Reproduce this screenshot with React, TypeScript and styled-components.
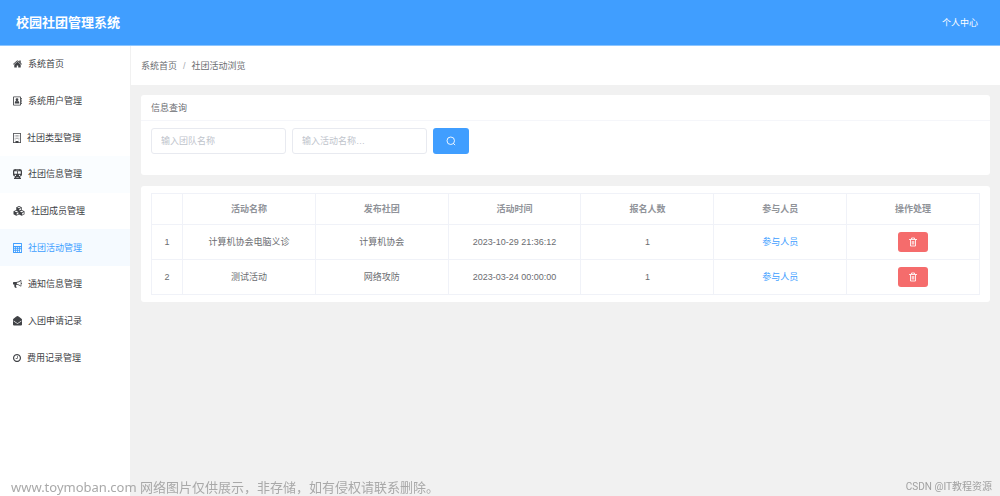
import React from 'react';
import styled, { createGlobalStyle } from 'styled-components';

const GlobalStyle = createGlobalStyle`
  * { box-sizing: border-box; }
  body {
    margin: 0;
    background: #f1f1f1;
    color: #6b6d71;
    font: 9px/14px "Liberation Sans", "Noto Sans CJK SC", sans-serif;
  }
  button, input { font: inherit; }
  a { color: inherit; text-decoration: none; }
`;

const Page = styled.div`
  display: flex;
  flex-direction: column;
  min-height: 100vh;
`;

const Header = styled.header`
  display: flex;
  align-items: center;
  justify-content: space-between;
  height: 46px;
  padding: 0 22px 0 16px;
  background: #409eff;
  border-bottom: 1px solid #8cc5ff;
  color: #fff;
`;

const Title = styled.h1`
  margin: 0;
  font-size: 13px;
  line-height: 20px;
  font-weight: 700;
`;

const Body = styled.div`
  display: flex;
  flex: 1;
`;

const Sidebar = styled.nav`
  flex: none;
  width: 130px;
  background: #fff;
`;

const Menu = styled.ul`
  display: grid;
  grid-auto-rows: 1fr;
  height: 330px;
  margin: 0;
  padding: 0;
  list-style: none;
`;

const MenuLink = styled.a<{ $state?: 'active' | 'hover' }>`
  display: flex;
  align-items: center;
  gap: 6px;
  height: 100%;
  padding-left: 13px;
  color: ${(p) => (p.$state === 'active' ? '#409eff' : '#404246')};
  background: ${(p) => (p.$state === 'active' ? '#f5faff' : p.$state === 'hover' ? '#fafdff' : 'transparent')};
`;

const Glyph = styled.svg<{ $w: number; $h?: number }>`
  flex: none;
  width: ${(p) => p.$w}px;
  height: ${(p) => p.$h ?? 10}px;
  fill: currentColor;
`;

const Main = styled.main`
  flex: 1;
  min-width: 0;
`;

const Breadcrumb = styled.nav`
  display: flex;
  align-items: center;
  gap: 6px;
  height: 39px;
  padding-left: 10px;
  background: #fff;
  border-left: 1px solid #f1f1f1;
`;

const Slash = styled.span`
  color: #a8abb2;
`;

const Content = styled.div`
  display: flex;
  flex-direction: column;
  gap: 11px;
  padding: 10px 10px 10px 11px;
`;

const Card = styled.section`
  background: #fff;
  border-radius: 3px;
`;

const CardTitle = styled.h2`
  margin: 0;
  padding: 6px 10px 5px;
  border-bottom: 1px solid #f5f6fa;
  font-size: 9px;
  line-height: 14px;
  font-weight: 400;
`;

const SearchForm = styled.form`
  display: flex;
  gap: 6px;
  padding: 7px 10px 21px;
`;

const TextInput = styled.input`
  width: 135px;
  height: 26px;
  padding: 0 9px;
  border: 1px solid #e8eaf0;
  border-radius: 3px;
  background: #fff;
  color: #606266;
  &::placeholder { color: #c0c4cc; opacity: 1; }
`;

const Button = styled.button<{ $kind: 'primary' | 'danger' }>`
  display: inline-flex;
  align-items: center;
  justify-content: center;
  width: ${(p) => (p.$kind === 'primary' ? 36 : 30)}px;
  height: ${(p) => (p.$kind === 'primary' ? 26 : 20)}px;
  padding: 0;
  border: 0;
  border-radius: 3px;
  background: ${(p) => (p.$kind === 'primary' ? '#409eff' : '#f56c6c')};
  color: #fff;
  vertical-align: middle;
`;

const TableCard = styled(Card)`
  padding: 7px 10px;
`;

const Table = styled.table`
  width: 100%;
  table-layout: fixed;
  border-collapse: collapse;
  text-align: center;
`;

const Cell = styled.td`
  height: 35px;
  padding: 0;
  border: 1px solid #f0f2f8;
`;

const HeadCell = styled.th<{ $narrow?: boolean }>`
  width: ${(p) => (p.$narrow ? '31px' : 'auto')};
  height: 31px;
  padding: 0;
  border: 1px solid #f0f2f8;
  color: #909399;
  font-weight: 700;
`;

const MemberLink = styled.a`
  color: #409eff;
`;

const SiteMark = styled.div`
  position: fixed;
  left: 11px;
  bottom: 0;
  color: #a9a9a9;
  font: 13px/18px "Noto Sans", "Noto Sans CJK SC", sans-serif;
`;

const AuthorMark = styled.div`
  position: fixed;
  right: 8px;
  bottom: 2px;
  color: #a0a0a0;
  font: 10px/14px Roboto, "Noto Sans CJK SC", sans-serif;
`;

type MenuItem = {
  label: string;
  width: number;
  viewBox: string;
  art: React.ReactNode;
  state?: 'active' | 'hover';
};

const menu: MenuItem[] = [
  {
    label: '系统首页', width: 9, viewBox: '90 100 1612 1600',
    art: <path d="M1472 992v480q0 26-19 45t-45 19h-384v-384h-256v384h-384q-26 0-45-19t-19-45v-480q0-1 .5-3t.5-3l575-474 575 474q1 2 1 6zm223-69l-62 74q-8 9-21 11h-3q-13 0-21-7l-692-577-692 577q-12 8-24 7-13-2-21-11l-62-74q-8-10-7-23.5t11-21.5l719-599q32-26 76-26t76 26l244 204v-195q0-14 9-23t23-9h192q14 0 23 9t9 23v408l219 182q10 8 11 21.5t-7 23.5z" />,
  },
  {
    label: '系统用户管理', width: 9, viewBox: '0 0 18 20',
    art: (
      <>
        <path fillRule="evenodd" d="M1.500 1h13q1.500 0 1.500 1.500v15q0 1.500-1.500 1.500h-13Q0 19 0 17.500v-15Q0 1 1.500 1zM1.700 2.700v14.600h12.600V2.700z" />
        <path d="M16.500 4H18v3h-1.500zM16.500 8.500H18v3h-1.500zM16.500 13H18v3h-1.500z" />
        <circle cx="8" cy="7.500" r="2.800" />
        <path d="M3.500 15v-1.500Q3.500 10 6 9.800q2 1.500 4 0 2.500.2 2.500 3.700V15z" />
      </>
    ),
  },
  {
    label: '社团类型管理', width: 8, viewBox: '0 0 16 20',
    art: (
      <>
        <path fillRule="evenodd" d="M1 0h14q1 0 1 1v18q0 1-1 1H1q-1 0-1-1V1q0-1 1-1zm.600 1.600v16.800H5V16h6v2.400h3.400V1.600z" />
        <path opacity="0.7" d="M3.500 4H5v1.500H3.500zM6 4h1.500v1.500H6zM8.500 4H10v1.500H8.500zM11 4h1.500v1.500H11zM3.500 7H5v1.500H3.500zM6 7h1.500v1.500H6zM8.500 7H10v1.500H8.500zM11 7h1.500v1.500H11zM3.500 10H5v1.500H3.500zM6 10h1.500v1.500H6zM8.500 10H10v1.500H8.500zM11 10h1.500v1.500H11zM3.500 13H5v1.500H3.500zM11 13h1.500v1.500H11z" />
      </>
    ),
  },
  {
    label: '社团信息管理', width: 9, viewBox: '0 0 18 20', state: 'hover',
    art: <path fillRule="evenodd" d="M5 0h8q5 0 5 4v7q0 4-4.500 4.500L16 18.500V20H2v-1.500L4.500 15.500Q0 15 0 11V4q0-4 5-4zM2.500 4.500v5h5.700v-5zm7.300 0v5h5.700v-5zM5.500 1.500v1h7v-1zM4.800 11.300a1.300 1.300 0 1 0 .01 0zm8.400 0a1.300 1.300 0 1 0 .01 0zM7 17l-1 1.200h6L11 17z" />,
  },
  {
    label: '社团成员管理', width: 12, viewBox: '0 0 24 20',
    art: <path fillRule="evenodd" d="M12 0l5.500 2.300V8l5.500 2.500v6L17.500 19.500 12 17l-5.500 2.500L1 16.500v-6L6.500 8V2.300zM8.500 3.200L12 4.700l3.500-1.500L12 1.800zM12.700 6v3l3.300-1.400V4.500zM3.200 11.200l3.500 1.500 3.500-1.500-3.500-1.500zm4.200 3v3.200l3.300-1.500v-3.200zm6.200-3l3.700 1.500 3.700-1.500-3.700-1.500zm4.700 3v3.200l3.200-1.600v-3.100z" />,
  },
  {
    label: '社团活动管理', width: 9, viewBox: '0 0 18 20', state: 'active',
    art: <path fillRule="evenodd" d="M1.200 0h15.600Q18 0 18 1.200v17.600q0 1.200-1.200 1.200H1.200Q0 20 0 18.800V1.200Q0 0 1.200 0zM1.800 1.800v4.400h14.400V1.800zM2 8.500v2h2.400v-2zm4 0v2h2.400v-2zm4 0v2h2.400v-2zm4 0v2h2.200v-2zM2 12.300v2h2.400v-2zm4 0v2h2.400v-2zm4 0v2h2.400v-2zM2 16.200v2h2.400v-2zm4 0v2h2.400v-2zm4 0v2h2.400v-2zm4-3.900v5.900h2.200v-5.900z" />,
  },
  {
    label: '通知信息管理', width: 9, viewBox: '0 100 1792 1600',
    art: <path d="M1664 640q53 0 90.500 37.500t37.500 90.500-37.500 90.500-90.500 37.500v384q0 52-38 90t-90 38q-417-347-812-380-58 19-91 66t-31 100.500 40 92.500q-20 33-23 65.500t6 58 33.500 55 48 50 61.500 50.500q-29 58-111.500 83t-168.500 11.500-132-55.500q-7-23-29.500-87.500t-32-94.500-23-89-15-101 3.500-98.500 22-110.500h-122q-66 0-113-47t-47-113v-192q0-66 47-113t113-47h480q435 0 896-384 52 0 90 38t38 90v384zm-128 604v-954q-394 302-768 343v270q377 42 768 341z" />,
  },
  {
    label: '入团申请记录', width: 9, viewBox: '0 0 18 20',
    art: <path fillRule="evenodd" d="M9 0q1 0 3 1.500l5 4.200q1 .8 1 2V17q0 2-2 2H2q-2 0-2-2V7.700q0-1.200 1-2l5-4.200Q8 0 9 0zM1.200 8.800v1.600l5.600 4.200q2.200 1.600 4.400 0l5.600-4.200V8.800l-6.200 4.600q-1.600 1.100-3.200 0z" />,
  },
  {
    label: '费用记录管理', width: 8, viewBox: '128 128 1536 1536',
    art: <path d="M1024 544v448q0 14-9 23t-23 9h-320q-14 0-23-9t-9-23v-64q0-14 9-23t23-9h224v-352q0-14 9-23t23-9h64q14 0 23 9t9 23zm416 352q0-148-73-273t-198-198-273-73-273 73-198 198-73 273 73 273 198 198 273 73 273-73 198-198 73-273zm224 0q0 209-103 385.500t-279.500 279.500-385.500 103-385.500-103-279.500-279.500-103-385.500 103-385.500 279.500-279.500 385.500-103 385.500 103 279.500 279.500 103 385.500z" />,
  },
];

const columns = ['活动名称', '发布社团', '活动时间', '报名人数', '参与人员', '操作处理'];

const rows = [
  { name: '计算机协会电脑义诊', club: '计算机协会', time: '2023-10-29 21:36:12', count: 1 },
  { name: '测试活动', club: '网络攻防', time: '2023-03-24 00:00:00', count: 1 },
];

const SearchIcon = () => (
  <Glyph $w={10} viewBox="0 0 20 20" aria-hidden="true">
    <g fill="none" stroke="currentColor" strokeWidth="1.800">
      <circle cx="9.500" cy="9.500" r="7.500" />
      <path d="M14.800 14.800l3.400 3.400" />
    </g>
  </Glyph>
);

const TrashIcon = () => (
  <Glyph $w={10} viewBox="0 0 20 20" aria-hidden="true">
    <path d="M2 5h16M7 4V2h6v2M5 5v13h10V5M8.500 8v7M11.500 8v7" fill="none" stroke="currentColor" strokeWidth="1.700" />
  </Glyph>
);

export default function App() {
  return (
    <Page>
      <GlobalStyle />
      <Header>
        <Title>校园社团管理系统</Title>
        <a href="#profile">个人中心</a>
      </Header>
      <Body>
        <Sidebar>
          <Menu>
            {menu.map((item) => (
              <li key={item.label}>
                <MenuLink href="#menu" $state={item.state}>
                  <Glyph $w={item.width} viewBox={item.viewBox} aria-hidden="true">{item.art}</Glyph>
                  {item.label}
                </MenuLink>
              </li>
            ))}
          </Menu>
        </Sidebar>
        <Main>
          <Breadcrumb>
            <a href="#home">系统首页</a>
            <Slash>/</Slash>
            <span>社团活动浏览</span>
          </Breadcrumb>
          <Content>
            <Card>
              <CardTitle>信息查询</CardTitle>
              <SearchForm onSubmit={(e) => e.preventDefault()}>
                <TextInput aria-label="团队名称" placeholder="输入团队名称" />
                <TextInput aria-label="活动名称" placeholder="输入活动名称…" />
                <Button $kind="primary" aria-label="查询"><SearchIcon /></Button>
              </SearchForm>
            </Card>
            <TableCard>
              <Table>
                <thead>
                  <tr>
                    <HeadCell $narrow />
                    {columns.map((c) => <HeadCell key={c}>{c}</HeadCell>)}
                  </tr>
                </thead>
                <tbody>
                  {rows.map((r, i) => (
                    <tr key={r.name}>
                      <Cell>{i + 1}</Cell>
                      <Cell>{r.name}</Cell>
                      <Cell>{r.club}</Cell>
                      <Cell>{r.time}</Cell>
                      <Cell>{r.count}</Cell>
                      <Cell><MemberLink href="#members">参与人员</MemberLink></Cell>
                      <Cell><Button $kind="danger" type="button" aria-label="删除"><TrashIcon /></Button></Cell>
                    </tr>
                  ))}
                </tbody>
              </Table>
            </TableCard>
          </Content>
        </Main>
      </Body>
      <SiteMark>www.toymoban.com 网络图片仅供展示，非存储，如有侵权请联系删除。</SiteMark>
      <AuthorMark>CSDN @IT教程资源</AuthorMark>
    </Page>
  );
}
